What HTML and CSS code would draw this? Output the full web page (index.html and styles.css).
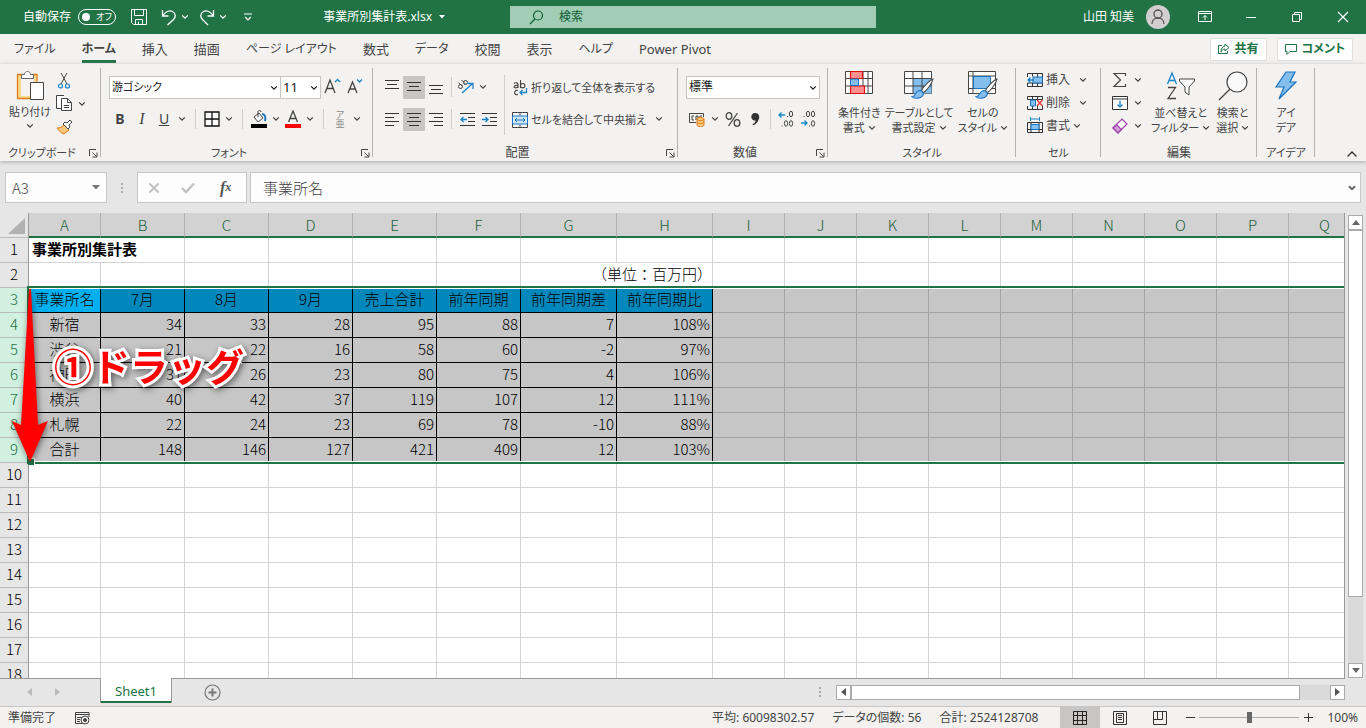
FILE: index.html
```html
<!DOCTYPE html>
<html lang="ja">
<head>
<meta charset="utf-8">
<title>事業所別集計表.xlsx</title>
<link rel="stylesheet" href="styles.css">
</head>
<body>
<svg class="defs" aria-hidden="true">
  <symbol id="chev" viewBox="0 0 8 6"><path d="M1.200 1.400 4 4.200 6.800 1.400" fill="none" stroke="currentColor" stroke-width="1.300"/></symbol>
  <symbol id="launch" viewBox="0 0 10 10"><path d="M1.500 8V1.500H8M4.500 4.500l4 4M9 4.500V9H4.500" fill="none" stroke="currentColor"/></symbol>
  <symbol id="dots" viewBox="0 0 4 12"><path d="M1 1h2v2H1zM1 5h2v2H1zM1 9h2v2H1z" fill="currentColor"/></symbol>
  <symbol id="brush" viewBox="0 0 22 20"><path d="M21 1C18 2 12 8 10 12l2 2C16 11 20 5 21 1z" fill="#fff" stroke="#444"/><path d="M1 18c3 0 3-5 7-6 3 0 5 3 3 5-2 3-7 3-10 1z" fill="#83beec" stroke="#1a73bf"/></symbol>
</svg>

<header class="titlebar">
  <div class="title-left">
    <label class="autosave">自動保存
      <span class="switch"><input type="checkbox" role="switch"><span class="switch-text">オフ</span></span>
    </label>
    <button class="tb save" aria-label="保存"><svg width="18" height="18" viewBox="0 0 18 18" fill="none" stroke="#fff"><path d="M1.500 1.500h15v15h-13l-2-2zM4.500 1.500v6h9v-6M5.500 16.500v-5h7v5M8.500 13.500v3"/></svg></button>
    <button class="tb" aria-label="元に戻す"><svg width="18" height="18" viewBox="0 0 18 18" fill="none" stroke="#fff" stroke-width="1.300"><path d="M2.500 2v6h6M2.800 7.500C6 3 10 2 12.500 3.500c3.500 2 3.500 5.500 1 8L7.500 17"/></svg></button>
    <button class="tb drop" aria-label="元に戻すの一覧"><svg class="chev"><use href="#chev"/></svg></button>
    <button class="tb" aria-label="やり直し"><svg width="18" height="18" viewBox="0 0 18 18" fill="none" stroke="#fff" stroke-width="1.300"><path d="M15.500 2v6h-6M15.200 7.500C12 3 8 2 5.500 3.500c-3.500 2-3.500 5.500-1 8L10 17"/></svg></button>
    <button class="tb drop" aria-label="やり直しの一覧"><svg class="chev"><use href="#chev"/></svg></button>
    <button class="tb quick" aria-label="クイック アクセス"><svg width="8" height="8" viewBox="0 0 8 8" fill="none" stroke="#fff" stroke-width="1.200"><path d="M0 1h8M1.200 4 4 6.800 6.800 4"/></svg></button>
    <button class="tb doc">事業所別集計表.xlsx<svg width="6" height="4" viewBox="0 0 6 4"><path d="M0 0h6L3 3.500z" fill="#fff"/></svg></button>
  </div>
  <label class="search">
    <svg width="15" height="15" viewBox="0 0 15 15" fill="none" stroke="#0f5c35" stroke-width="1.200"><circle cx="9" cy="5.500" r="4.500"/><path d="M6 9 1 14"/></svg>
    <input type="text" placeholder="検索" aria-label="検索">
  </label>
  <div class="title-right">
    <span class="user">山田 知美</span>
    <svg class="avatar" width="24" height="24" viewBox="0 0 24 24" fill="none" stroke="#555" stroke-width="1.300"><circle cx="12" cy="12" r="12" fill="#d0cece" stroke="none"/><circle cx="12" cy="9" r="4"/><path d="M6 19c0-8 12-8 12 0"/></svg>
    <button class="win" aria-label="リボンの表示オプション"><svg width="14" height="12" viewBox="0 0 14 12" fill="none" stroke="#fff"><path d="M.5.5h13v10H.5zM.5 2.500h13M7 9V4.500M5 6.500l2-2 2 2"/></svg></button>
    <button class="win" aria-label="最小化"><svg width="12" height="12" viewBox="0 0 12 12"><path d="M1 6.500h10" stroke="#fff"/></svg></button>
    <button class="win" aria-label="元に戻す (縮小)"><svg width="12" height="12" viewBox="0 0 12 12" fill="none" stroke="#fff"><path d="M1.500 3.500h7v7h-7zM3.500 3.500v-2h7v7h-2"/></svg></button>
    <button class="win" aria-label="閉じる"><svg width="12" height="12" viewBox="0 0 12 12"><path d="m1 1 10 10M11 1 1 11" stroke="#fff" stroke-width="1.200"/></svg></button>
  </div>
</header>

<nav class="tabs">
  <a href="#" class="kana">ファイル</a><a href="#" class="kana current">ホーム</a><a href="#">挿入</a><a href="#">描画</a><a href="#" class="kana">ページ レイアウト</a><a href="#">数式</a><a href="#" class="kana">データ</a><a href="#">校閲</a><a href="#">表示</a><a href="#" class="kana">ヘルプ</a><a href="#">Power Pivot</a>
  <div class="tab-actions">
    <button><svg width="12" height="12" viewBox="0 0 12 12" fill="none" stroke="#217346"><path d="M4 2.500H.5v8h9V8M7 1l4 3.500L7 8V6C5 6 4 7 3 9c0-3 1-5.500 4-6z"/></svg>共有</button>
    <button><svg width="12" height="12" viewBox="0 0 12 12" fill="none" stroke="#217346"><path d="M.5 1.500h11v7H5l-3 3v-3H.5z"/></svg>コメント</button>
  </div>
</nav>

<section class="ribbon" aria-label="ホーム">
  <div class="group g-clip">
    <div class="body top">
      <button class="large"><svg width="28" height="32" viewBox="0 0 28 32" fill="none"><path d="M2 5h6v3H5v18h9v3H1V5zM15 5h6v7h-3V8h-3z" fill="#f9d98b"/><path d="M7 4.500H1.500v24H14M16 4.500h5v7" stroke="#e07b1a" stroke-width="1.300"/><path d="M5.500 8.500v-4h3c0-4 6-4 6 0h3v4z" fill="#fff" stroke="#666"/><path d="M14.500 12.500h13v17h-13z" fill="#fff" stroke="#444"/></svg>貼り付け<svg class="chev"><use href="#chev"/></svg></button>
      <div class="stack">
        <div class="line"><button class="ic" aria-label="切り取り"><svg width="16" height="16" viewBox="0 0 16 16" fill="none"><path d="M5 0l6 11M11 0 5 11" stroke="#444"/><circle cx="4.500" cy="13" r="2" stroke="#1a84c8" stroke-width="1.200"/><circle cx="11.500" cy="13" r="2" stroke="#1a84c8" stroke-width="1.200"/></svg></button></div>
        <div class="line"><button class="ic" aria-label="コピー"><svg width="16" height="17" viewBox="0 0 16 17" fill="#fff" stroke="#444"><path d="M6 13.500H.5V.5H8"/><path d="M5.500 3.500h6l4 4v8h-10z"/><path d="M11.500 3.500v4h4M8 10.500h5M8 12.500h5" fill="none"/></svg></button><button class="drop" aria-label="コピーの一覧"><svg class="chev"><use href="#chev"/></svg></button></div>
        <div class="line"><button class="ic" aria-label="書式のコピー"><svg width="17" height="16" viewBox="0 0 17 16"><path d="M1 9c3 0 5-1 7-3l5 5c-2 1-3 3-5 4-3-1-5-3-7-6z" fill="#f9c87a" stroke="#e07b1a"/><path d="m7 5 2-2 2 1 3-3 2 2-3 3 1 2-2 2z" fill="#fff" stroke="#444"/></svg></button></div>
      </div>
    </div>
    <div class="caption kana">クリップボード<button aria-label="クリップボードの詳細"><svg><use href="#launch"/></svg></button></div>
  </div>

  <div class="group g-font">
    <div class="body rows">
      <div class="line">
        <span class="combo face"><select class="kana" aria-label="フォント"><option>游ゴシック</option></select><svg class="chev"><use href="#chev"/></svg></span><span class="combo size"><select aria-label="フォント サイズ"><option>11</option></select><svg class="chev"><use href="#chev"/></svg></span>
        <button class="ic" aria-label="フォント サイズの拡大"><svg width="18" height="18" viewBox="0 0 18 18" fill="none"><path d="M2 15 7 2l5 13M4 10.500h6" stroke="#444" stroke-width="1.300"/><path d="m12 4 2.500-2.500L17 4" stroke="#1a84c8" stroke-width="1.300"/></svg></button>
        <button class="ic" aria-label="フォント サイズの縮小"><svg width="18" height="18" viewBox="0 0 18 18" fill="none"><path d="M3 15 7.500 4 12 15M5 11h5" stroke="#444" stroke-width="1.300"/><path d="M12 1.500 14.500 4 17 1.500" stroke="#1a84c8" stroke-width="1.300"/></svg></button>
      </div>
      <div class="line">
        <button class="ic b">B</button><button class="ic i">I</button><button class="ic u">U</button><button class="drop" aria-label="下線の一覧"><svg class="chev"><use href="#chev"/></svg></button>
        <i class="sep"></i>
        <button class="ic n" aria-label="罫線"><svg width="16" height="16" viewBox="0 0 16 16"><path d="M1 1h14v14H1zM8 1v14M1 8h14" fill="#fff" stroke="#111" stroke-width="1.300"/></svg></button><button class="drop" aria-label="罫線の一覧"><svg class="chev"><use href="#chev"/></svg></button>
        <i class="sep"></i>
        <button class="ic n" aria-label="塗りつぶしの色"><svg width="18" height="18" viewBox="0 0 18 18" fill="none"><path d="M1 14h16v4H1z" fill="#000"/><path d="m4 7 5-4 4 5-5 4zM8 7V2c0-2 3-2 3 0" stroke="#444" fill="#fff"/><path d="M12 4c3 0 4 3 3 7" stroke="#1a73bf" stroke-width="2"/></svg></button><button class="drop" aria-label="塗りつぶしの色の一覧"><svg class="chev"><use href="#chev"/></svg></button>
        <button class="ic n" aria-label="フォントの色"><svg width="18" height="18" viewBox="0 0 18 18" fill="none"><path d="M1 14h16v4H1z" fill="#f00"/><path d="M4.500 12 9 1l4.500 11M6 8.500h6" stroke="#444" stroke-width="1.300"/></svg></button><button class="drop" aria-label="フォントの色の一覧"><svg class="chev"><use href="#chev"/></svg></button>
        <i class="sep"></i>
        <button class="ic n ruby" aria-label="ふりがな"><span>ア</span><span>亜</span></button><button class="drop" aria-label="ふりがなの一覧"><svg class="chev"><use href="#chev"/></svg></button>
      </div>
    </div>
    <div class="caption kana">フォント<button aria-label="フォントの詳細"><svg><use href="#launch"/></svg></button></div>
  </div>

  <div class="group g-align">
    <div class="body columns">
      <div class="rows">
        <div class="line">
          <button class="ic" aria-label="上揃え"><svg width="14" height="14" viewBox="0 0 14 14"><path d="M0 .5h14M2 4.500h10M0 8.500h14" stroke="#333"/></svg></button><button class="ic on" aria-label="上下中央揃え"><svg width="14" height="14" viewBox="0 0 14 14"><path d="M0 2.500h14M2 6.500h10M0 10.500h14" stroke="#333"/></svg></button><button class="ic" aria-label="下揃え"><svg width="14" height="14" viewBox="0 0 14 14"><path d="M0 5.500h14M2 9.500h10M0 13.500h14" stroke="#333"/></svg></button>
          <i class="sep"></i>
          <button class="ic n" aria-label="方向"><svg width="18" height="16" viewBox="0 0 18 16" fill="none"><g stroke="#444"><circle cx="3.500" cy="7.500" r="2"/><path d="m1.500 3.500 4 4"/><circle cx="8.500" cy="3.500" r="2"/><path d="M4.500 1l4 4"/></g><path d="M5 14 15 5M10.500 4.500H16V10" stroke="#1a84c8" stroke-width="1.300"/></svg></button><button class="drop" aria-label="方向の一覧"><svg class="chev"><use href="#chev"/></svg></button>
        </div>
        <div class="line">
          <button class="ic" aria-label="左揃え"><svg width="14" height="14" viewBox="0 0 14 14"><path d="M0 1.500h14M0 5.500h9M0 9.500h14M0 13.500h9" stroke="#333"/></svg></button><button class="ic on" aria-label="中央揃え"><svg width="14" height="14" viewBox="0 0 14 14"><path d="M0 1.500h14M2 5.500h10M0 9.500h14M2 13.500h10" stroke="#333"/></svg></button><button class="ic" aria-label="右揃え"><svg width="14" height="14" viewBox="0 0 14 14"><path d="M0 1.500h14M5 5.500h9M0 9.500h14M5 13.500h9" stroke="#333"/></svg></button>
          <i class="sep"></i>
          <button class="ic" aria-label="インデントを減らす"><svg width="15" height="14" viewBox="0 0 15 14" fill="none"><path d="M0 1.500h15M8 5.500h7M8 9.500h7M0 13.500h15" stroke="#333"/><path d="M7 7.500H1M3.500 5 1 7.500 3.500 10" stroke="#1a84c8" stroke-width="1.300"/></svg></button><button class="ic" aria-label="インデントを増やす"><svg width="15" height="14" viewBox="0 0 15 14" fill="none"><path d="M0 1.500h15M8 5.500h7M8 9.500h7M0 13.500h15" stroke="#333"/><path d="M0 7.500h6M3.500 5 6 7.500 3.500 10" stroke="#1a84c8" stroke-width="1.300"/></svg></button>
        </div>
      </div>
      <i class="sep tall"></i>
      <div class="rows">
        <div class="line"><button class="wide kana"><svg width="16" height="17" viewBox="0 0 16 17" fill="none"><g stroke="#444" stroke-width="1.100"><path d="M2 3.500c2-1.500 4-.5 4 1V8M6 5.500C3 5 2 6 2 7s3 1.500 4-.5M8.500 0v8"/><circle cx="10.700" cy="5.700" r="2.200"/><path d="M6 10.500c-4-1.500-5 5.500 0 4"/></g><path d="M14.500 8v4.500H8M10.500 10 8 12.500l2.500 2.500" stroke="#1a84c8" stroke-width="1.300"/></svg>折り返して全体を表示する</button></div>
        <div class="line"><button class="wide kana"><svg width="16" height="16" viewBox="0 0 16 16" fill="none"><path d="M.5.5h15v15H.5zM8 .5v3M8 12.500v3" stroke="#444" fill="#fff"/><path d="M.5 4h15v8H.5z" stroke="#1a73bf" fill="#cfe6f8"/><path d="M3 8h10M5 6 3 8l2 2M11 6l2 2-2 2" stroke="#1a73bf"/></svg>セルを結合して中央揃え</button><button class="drop far" aria-label="結合の一覧"><svg class="chev"><use href="#chev"/></svg></button></div>
      </div>
    </div>
    <div class="caption">配置<button aria-label="配置の詳細"><svg><use href="#launch"/></svg></button></div>
  </div>

  <div class="group g-num">
    <div class="body rows">
      <div class="line"><span class="combo format"><select aria-label="表示形式"><option>標準</option></select><svg class="chev"><use href="#chev"/></svg></span></div>
      <div class="line">
        <button class="ic" aria-label="通貨表示形式"><svg width="18" height="16" viewBox="0 0 18 16" fill="none"><path d="M8 11.500H1.500v-9h14V6" stroke="#444"/><path d="M6 5H4v4h2M8 9V5h2v3M12 6V5h2" stroke="#444"/><path d="M9 8c0-2 7-2 7 0v6c0 2-7 2-7 0z" fill="#f9c87a" stroke="#e07b1a"/><path d="M9 8c0 2 7 2 7 0M9 11c0 2 7 2 7 0" stroke="#e07b1a"/></svg></button><button class="drop" aria-label="通貨の一覧"><svg class="chev"><use href="#chev"/></svg></button>
        <button class="ic" aria-label="パーセント スタイル"><svg width="16" height="15" viewBox="0 0 16 15" fill="none" stroke="#444" stroke-width="1.300"><ellipse cx="4" cy="4" rx="2.800" ry="3.300"/><ellipse cx="12" cy="11" rx="2.800" ry="3.300"/><path d="M12.500 1 3.500 14"/></svg></button>
        <button class="ic" aria-label="桁区切りスタイル"><svg width="10" height="14" viewBox="0 0 10 14"><path d="M5 1c5 0 5 5 3 8-1 2-3 4-5 4l-.5-1c2-.5 3-2 3-3.500C0 9 0 1 5 1z" fill="#333"/></svg></button>
        <i class="sep"></i>
        <button class="ic dec" aria-label="小数点以下の表示桁数を増やす"><svg width="18" height="18" viewBox="0 0 18 18" fill="none"><path d="M8 5H2M4.500 2.500 2 5l2.500 2.500" stroke="#1a84c8" stroke-width="1.300"/><g stroke="#444"><ellipse cx="14" cy="4" rx="1.600" ry="2.800"/><ellipse cx="9" cy="13.500" rx="1.600" ry="2.800"/><ellipse cx="14" cy="13.500" rx="1.600" ry="2.800"/><path d="M10 6.500h1M4.500 16h1"/></g></svg></button>
        <button class="ic dec" aria-label="小数点以下の表示桁数を減らす"><svg width="18" height="18" viewBox="0 0 18 18" fill="none"><path d="M2 13h6M5.500 10.500 8 13l-2.500 2.500" stroke="#1a84c8" stroke-width="1.300"/><g stroke="#444"><ellipse cx="9" cy="4" rx="1.600" ry="2.800"/><ellipse cx="14" cy="4" rx="1.600" ry="2.800"/><ellipse cx="14" cy="13.500" rx="1.600" ry="2.800"/><path d="M4.500 6.500h1M10 16h1"/></g></svg></button>
      </div>
    </div>
    <div class="caption">数値<button aria-label="数値の詳細"><svg><use href="#launch"/></svg></button></div>
  </div>

  <div class="group g-style">
    <div class="body top">
      <button class="large"><svg width="30" height="26" viewBox="0 0 30 26"><path d="M1.500 1.500h27v22h-27zM1.500 8.500h27M1.500 16h27M6.500 1.500v22M24 1.500v22M19 1.500v22" fill="#fff" stroke="#444"/><path d="M6.500 1.500h12v7h-12zM6.500 16h14v7.500h-14z" fill="#ff8f8f" stroke="#d11" stroke-width="1.200"/><path d="M6.500 9h8v6.500h-8z" fill="#83beec" stroke="#1a73bf"/></svg>条件付き<span>書式<svg class="chev"><use href="#chev"/></svg></span></button>
      <button class="large"><svg width="32" height="29" viewBox="0 0 32 29"><path d="M1.500 1.500h27v22h-27z" fill="#fff" stroke="#444"/><path d="M10 8h18.500v15.500H10z" fill="#83beec"/><path d="M1.500 8.500h27M1.500 16h27M10 1.500v22M19 1.500v22" stroke="#444" fill="none"/><use href="#brush" x="8" y="8" width="23" height="21"/></svg>テーブルとして<span>書式設定<svg class="chev"><use href="#chev"/></svg></span></button>
      <button class="large"><svg width="32" height="29" viewBox="0 0 32 29"><path d="M1.500 1.500h27v22h-27zM1.500 6h27M1.500 18.500h27M6 1.500v22" fill="#fff" stroke="#444"/><path d="M6.500 6.500h17v12h-17z" fill="#83beec" stroke="#1a73bf"/><use href="#brush" x="8" y="8" width="23" height="21"/></svg>セルの<span>スタイル<svg class="chev"><use href="#chev"/></svg></span></button>
    </div>
    <div class="caption kana">スタイル</div>
  </div>

  <div class="group g-cell">
    <div class="body top">
      <div class="stack">
        <div class="line"><button class="wide"><svg width="16" height="16" viewBox="0 0 16 16" fill="none"><path d="M.5 5V1.500h15v13H.5V11M5.500 1.500v3M10.500 1.500v13M5.500 11v3.500M.5 11h15" stroke="#333"/><path d="M6 5h9.500v6H6z" fill="#83beec" stroke="#1a73bf"/><path d="M7 8H1M3.500 5.500 1 8l2.500 2.500" stroke="#1a84c8" stroke-width="1.300"/></svg>挿入</button><button class="drop far" aria-label="挿入の一覧"><svg class="chev"><use href="#chev"/></svg></button></div>
        <div class="line"><button class="wide"><svg width="16" height="16" viewBox="0 0 16 16" fill="none"><path d="M.5 4.500v-3h15v3M.5 11v3.500h15V11M5.500 1.500v3M10.500 1.500v3M5.500 11v3.500M10.500 11v3.500M.5 4.500h15" stroke="#333"/><path d="M3.500 5h5v6h-5z" fill="#83beec" stroke="#1a73bf"/><path d="m10 5 5.500 6M15.500 5 10 11" stroke="#e33" stroke-width="1.300"/></svg>削除</button><button class="drop far" aria-label="削除の一覧"><svg class="chev"><use href="#chev"/></svg></button></div>
        <div class="line"><button class="wide"><svg width="16" height="17" viewBox="0 0 16 17" fill="none"><path d="M.5 5.500h15v10H.5zM4 5.500v10M12 5.500v10M.5 12.500h15" stroke="#333"/><path d="M4 7.500h8v5H4z" fill="#83beec" stroke="#1a73bf"/><path d="M3.500 0v4M12.500 0v4M3.500 2h9" stroke="#1a84c8"/></svg>書式</button><button class="drop" aria-label="書式の一覧"><svg class="chev"><use href="#chev"/></svg></button></div>
      </div>
    </div>
    <div class="caption kana">セル</div>
  </div>

  <div class="group g-edit">
    <div class="body top">
      <div class="stack">
        <div class="line"><button class="ic" aria-label="オート SUM"><svg width="16" height="16" viewBox="0 0 16 16" fill="none"><path d="M13.500 4V1.500H2L8.500 8 2 14.500h11.500V12" stroke="#444" stroke-width="1.200"/></svg></button><button class="drop" aria-label="SUM の一覧"><svg class="chev"><use href="#chev"/></svg></button></div>
        <div class="line"><button class="ic" aria-label="フィル"><svg width="16" height="16" viewBox="0 0 16 16" fill="none"><path d="M.5 1.500h15v13H.5zM.5 4h15" stroke="#333" fill="#fff"/><path d="M8 5.500V12M5.500 9.500 8 12l2.500-2.500" stroke="#1a84c8" stroke-width="1.300"/></svg></button><button class="drop" aria-label="フィルの一覧"><svg class="chev"><use href="#chev"/></svg></button></div>
        <div class="line"><button class="ic" aria-label="クリア"><svg width="16" height="16" viewBox="0 0 16 16"><path d="m1 10 9-9 5 5-9 9z" fill="#fff" stroke="#9b3fa8" stroke-width="1.200"/><path d="m1 10 3.500-3.500 5 5L6 15z" fill="#d39bdb" stroke="#9b3fa8" stroke-width="1.200"/></svg></button><button class="drop" aria-label="クリアの一覧"><svg class="chev"><use href="#chev"/></svg></button></div>
      </div>
      <button class="large"><svg width="30" height="30" viewBox="0 0 30 30" fill="none"><path d="M1.500 13 6 2l4.500 11M3 9.500h6" stroke="#1a84c8" stroke-width="1.300"/><path d="M2 16.500h7.500L2 27.500h8" stroke="#444" stroke-width="1.300"/><path d="M13.500 8h15v2L23 16v8l-4-3v-5l-5.500-6z" fill="#fff" stroke="#444"/></svg>並べ替えと<span>フィルター<svg class="chev"><use href="#chev"/></svg></span></button>
      <button class="large"><svg width="30" height="30" viewBox="0 0 30 30" fill="none" stroke="#444" stroke-width="1.200"><circle cx="19" cy="11" r="10" fill="#fafafa"/><path d="M12 18 1 29"/></svg>検索と<span>選択<svg class="chev"><use href="#chev"/></svg></span></button>
    </div>
    <div class="caption">編集</div>
  </div>

  <div class="group g-idea">
    <div class="body top">
      <button class="large"><svg width="24" height="30" viewBox="0 0 24 30"><path d="M12 1h9l-5 10h6L5 28l5-12H2z" fill="#83beec" stroke="#1a73bf" stroke-width="1.200"/></svg>アイ<span>デア</span></button>
    </div>
    <div class="caption kana">アイデア</div>
  </div>
  <button class="collapse" aria-label="リボンを折りたたむ"><svg width="12" height="8" viewBox="0 0 12 8"><path d="m1.500 6.500 4.500-4.500 4.500 4.500" fill="none" stroke="#333" stroke-width="1.300"/></svg></button>
</section>

<div class="formula">
  <div class="box name"><input type="text" value="A3" aria-label="名前ボックス"><button aria-label="名前の一覧"><svg width="8" height="5" viewBox="0 0 8 5"><path d="M0 0h8L4 4.500z" fill="#777"/></svg></button></div>
  <svg class="dots"><use href="#dots"/></svg>
  <div class="box fx">
    <button aria-label="キャンセル"><svg width="12" height="12" viewBox="0 0 12 12"><path d="m1.500 1.500 9 9M10.500 1.500l-9 9" stroke="#c0c0c0" stroke-width="1.800"/></svg></button>
    <button aria-label="入力"><svg width="14" height="12" viewBox="0 0 14 12"><path d="m1 6 4 4 8-8.500" fill="none" stroke="#c0c0c0" stroke-width="2.400"/></svg></button>
    <button class="fx-btn">f<sub>x</sub></button>
  </div>
  <div class="box text"><input type="text" value="事業所名" aria-label="数式バー"><button aria-label="数式バーの展開"><svg width="8" height="6" viewBox="0 0 8 6"><path d="m1 1.200 3 3 3-3" fill="none" stroke="#666" stroke-width="2"/></svg></button></div>
</div>

<main class="work">
  <div class="sheet">
    <table>
      <colgroup><col class="c-row"><col class="c-a"><col span="5" class="c-b"><col span="2" class="c-g"><col span="9" class="c-a"></colgroup>
      <thead><tr><th class="corner"><svg width="18" height="18" viewBox="0 0 18 18"><path d="M17 1v16H0z" fill="#b1b1b1"/></svg></th><th>A</th><th>B</th><th>C</th><th>D</th><th>E</th><th>F</th><th>G</th><th>H</th><th>I</th><th>J</th><th>K</th><th>L</th><th>M</th><th>N</th><th>O</th><th>P</th><th>Q</th></tr></thead>
      <tbody>
        <tr><th>1</th><td class="heading" colspan="2">事業所別集計表</td><td><td><td><td><td><td><td><td><td><td><td><td><td><td><td></tr>
        <tr><th>2</th><td><td><td><td><td><td><td class="unit" colspan="2">（単位：百万円）</td><td><td><td><td><td><td><td><td><td></tr>
        <tr class="sel head"><th>3</th><td class="active">事業所名</td><td>7月</td><td>8月</td><td>9月</td><td>売上合計</td><td>前年同期</td><td>前年同期差</td><td>前年同期比</td><td><td><td><td><td><td><td><td><td></tr>
        <tr class="sel"><th>4</th><td>新宿</td><td>34</td><td>33</td><td>28</td><td>95</td><td>88</td><td>7</td><td>108%</td><td><td><td><td><td><td><td><td><td></tr>
        <tr class="sel"><th>5</th><td>渋谷</td><td>21</td><td>22</td><td>16</td><td>58</td><td>60</td><td>-2</td><td>97%</td><td><td><td><td><td><td><td><td><td></tr>
        <tr class="sel"><th>6</th><td>神田</td><td>31</td><td>26</td><td>23</td><td>80</td><td>75</td><td>4</td><td>106%</td><td><td><td><td><td><td><td><td><td></tr>
        <tr class="sel"><th>7</th><td>横浜</td><td>40</td><td>42</td><td>37</td><td>119</td><td>107</td><td>12</td><td>111%</td><td><td><td><td><td><td><td><td><td></tr>
        <tr class="sel"><th>8</th><td>札幌</td><td>22</td><td>24</td><td>23</td><td>69</td><td>78</td><td>-10</td><td>88%</td><td><td><td><td><td><td><td><td><td></tr>
        <tr class="sel"><th>9</th><td>合計</td><td>148</td><td>146</td><td>127</td><td>421</td><td>409</td><td>12</td><td>103%</td><td><td><td><td><td><td><td><td><td></tr>
        <tr><th>10</th><td><td><td><td><td><td><td><td><td><td><td><td><td><td><td><td><td></tr>
        <tr><th>11</th><td><td><td><td><td><td><td><td><td><td><td><td><td><td><td><td><td></tr>
        <tr><th>12</th><td><td><td><td><td><td><td><td><td><td><td><td><td><td><td><td><td></tr>
        <tr><th>13</th><td><td><td><td><td><td><td><td><td><td><td><td><td><td><td><td><td></tr>
        <tr><th>14</th><td><td><td><td><td><td><td><td><td><td><td><td><td><td><td><td><td></tr>
        <tr><th>15</th><td><td><td><td><td><td><td><td><td><td><td><td><td><td><td><td><td></tr>
        <tr><th>16</th><td><td><td><td><td><td><td><td><td><td><td><td><td><td><td><td><td></tr>
        <tr><th>17</th><td><td><td><td><td><td><td><td><td><td><td><td><td><td><td><td><td></tr>
        <tr><th>18</th><td><td><td><td><td><td><td><td><td><td><td><td><td><td><td><td><td></tr>
      </tbody>
    </table>
    <div class="selection"><span class="handle"></span></div>
    <svg class="drag-arrow" width="44" height="186" viewBox="0 0 44 186"><path d="M21 3h2l7 136 10-4-18 41L4 135l9 4z" fill="#f00"/></svg>
    <div class="note">①ドラッグ</div>
  </div>
  <div class="vscroll">
    <button aria-label="上へ"><svg width="8" height="5" viewBox="0 0 8 5"><path d="M0 5h8L4 0z" fill="#666"/></svg></button>
    <div class="thumb"></div>
    <button aria-label="下へ"><svg width="8" height="5" viewBox="0 0 8 5"><path d="M0 0h8L4 5z" fill="#666"/></svg></button>
  </div>
</main>

<div class="sheetbar">
  <button class="nav" aria-label="前のシート"><svg width="5" height="8" viewBox="0 0 5 8"><path d="M5 0v8L0 4z" fill="#bbb"/></svg></button>
  <button class="nav" aria-label="次のシート"><svg width="5" height="8" viewBox="0 0 5 8"><path d="M0 0v8l5-4z" fill="#bbb"/></svg></button>
  <button class="sheet-tab">Sheet1</button>
  <button class="add" aria-label="新しいシート"><svg width="17" height="17" viewBox="0 0 17 17" fill="none" stroke="#777"><circle cx="8.500" cy="8.500" r="7.500" stroke-width="1.200"/><path d="M8.500 4.500v8M4.500 8.500h8" stroke-width="2"/></svg></button>
  <svg class="dots"><use href="#dots"/></svg>
  <div class="hscroll">
    <button aria-label="左へ"><svg width="5" height="8" viewBox="0 0 5 8"><path d="M5 0v8L0 4z" fill="#555"/></svg></button>
    <div class="thumb"></div>
    <button aria-label="右へ"><svg width="5" height="8" viewBox="0 0 5 8"><path d="M0 0v8l5-4z" fill="#555"/></svg></button>
  </div>
</div>

<footer class="status">
  <span>準備完了</span>
  <svg class="macro" width="15" height="14" viewBox="0 0 15 14" fill="none" stroke="#444"><path d="M14 6V1.500H.5v11H7M.5 3.500h13.500M2 6.500h5M2 8.500h3M2 10.500h3"/><circle cx="10" cy="9" r="4"/><circle cx="10" cy="9" r="1.500" fill="#444"/></svg>
  <div class="stats"><span>平均: 60098302.57</span><span>データの個数: 56</span><span>合計: 2524128708</span></div>
  <div class="views">
    <button class="on" aria-label="標準"><svg width="14" height="14" viewBox="0 0 14 14" fill="none" stroke="#222"><path d="M.5.5h13v13H.5zM.5 4.500h13M.5 9.500h13M4.500.5v13M9.500.5v13"/></svg></button>
    <button aria-label="ページ レイアウト"><svg width="14" height="14" viewBox="0 0 14 14" fill="none" stroke="#333"><path d="M.5.5h13v13H.5zM3.500 2.500h7v9h-7zM5 4.500h4M5 6.500h4M5 8.500h4"/></svg></button>
    <button aria-label="改ページ プレビュー"><svg width="14" height="14" viewBox="0 0 14 14" fill="none" stroke="#333"><path d="M.5.5h13v13H.5zM4.500.5v8M9.500.5v8M.5 8.500h9"/></svg></button>
  </div>
  <button class="zoom-btn" aria-label="縮小"><svg width="9" height="9" viewBox="0 0 9 9"><path d="M0 4.500h9" stroke="#333"/></svg></button>
  <input class="zoom" type="range" min="0" max="100" value="50" aria-label="ズーム">
  <button class="zoom-btn" aria-label="拡大"><svg width="9" height="9" viewBox="0 0 9 9"><path d="M0 4.500h9M4.500 0v9" stroke="#333"/></svg></button>
  <span class="percent">100%</span>
</footer>
</body>
</html>
```
FILE: styles.css
```css
* { box-sizing: border-box; }
html, body { height: 100%; }
body {
  margin: 0;
  display: flex;
  flex-direction: column;
  overflow: hidden;
  background: #e6e6e6;
  color: #444;
  font: 12px/16px "Noto Sans", "Noto Sans CJK JP", sans-serif;
  font-feature-settings: "palt";
}
button, input, select {
  margin: 0;
  padding: 0;
  border: 0;
  border-radius: 0;
  background: none;
  color: inherit;
  font: inherit;
  font-feature-settings: inherit;
  outline: 0;
}
button { display: flex; align-items: center; justify-content: center; white-space: nowrap; }
svg { flex: none; display: block; }
.defs { position: absolute; width: 0; height: 0; }
.chev { width: 8px; height: 6px; }
.dots { width: 4px; height: 12px; color: #aaa; }
.kana { font-size: 11px; }

/* title bar */
.titlebar {
  flex: none;
  display: grid;
  grid-template-columns: 510fr 366fr 490fr;
  align-items: center;
  height: 34px;
  background: #217346;
  color: #fff;
}
.title-left, .title-right { display: flex; align-items: center; }
.title-left { padding-left: 23px; }
.autosave { display: flex; align-items: center; gap: 7px; }
.switch { position: relative; width: 38px; height: 16px; }
.switch input {
  appearance: none;
  display: block;
  width: 38px;
  height: 16px;
  border: 1px solid #fff;
  border-radius: 8px;
}
.switch input::before {
  content: "";
  display: block;
  width: 8px;
  height: 8px;
  margin: 3px;
  border-radius: 50%;
  background: #fff;
}
.switch-text { position: absolute; left: 18px; top: 0; font-size: 9px; }
.tb { height: 24px; }
.save { margin: 0 12px 0 14px; }
.drop { width: 14px; height: 22px; }
.tb.drop { width: 20px; padding-right: 6px; }
.quick { width: 26px; padding-right: 2px; }
.doc { gap: 7px; margin-left: auto; margin-right: 65px; }
.search {
  display: flex;
  align-items: center;
  gap: 15px;
  height: 22px;
  padding-left: 19px;
  background: #a0cdb4;
}
.search input { flex: 1; min-width: 0; }
.search input::placeholder { color: #0f5c35; opacity: 1; }
.title-right { justify-content: flex-end; }
.avatar { margin: 0 12px; }
.win { width: 46px; height: 32px; }

/* tabs */
.tabs {
  flex: none;
  display: flex;
  align-items: center;
  gap: 26px;
  height: 30px;
  padding: 0 13px 0 14px;
  background: #f3f2f1;
  font-size: 13px;
}
.tabs a {
  padding: 4px 0 2px;
  border-bottom: 3px solid transparent;
  color: #444;
  line-height: 18px;
  text-decoration: none;
  white-space: nowrap;
}
.tabs .kana { font-size: 12px; }
.tabs .current { border-color: #217346; font-weight: bold; }
.tab-actions { display: flex; gap: 10px; margin-left: auto; }
.tab-actions button {
  gap: 5px;
  height: 23px;
  padding: 0 7px;
  border: 1px solid #e1dfdd;
  border-radius: 2px;
  background: #fff;
  color: #217346;
  font-size: 12px;
  font-weight: bold;
}

/* ribbon */
.ribbon {
  flex: none;
  display: flex;
  position: relative;
  z-index: 1;
  height: 97px;
  background: #f3f2f1;
  box-shadow: 0 1px 4px #aaa;
}
.group { flex: none; display: flex; flex-direction: column; position: relative; padding: 4px 8px 0; }
.group::after { content: ""; position: absolute; right: 0; top: 4px; bottom: 4px; width: 1px; background: #b3b0ad; }
.g-clip { width: 101px; }
.g-font { width: 272px; }
.g-align { width: 305px; }
.g-num { width: 150px; }
.g-style { width: 188px; }
.g-cell { width: 85px; }
.g-edit { width: 156px; }
.g-idea { width: 58px; }
.body { flex: 1; display: flex; }
.body.rows { padding-top: 7px; }
.rows { display: flex; flex-direction: column; gap: 8px; }
.columns { padding-top: 7px; }
.line { display: flex; align-items: center; height: 24px; }
.stack .line { height: 23px; }
.caption { position: relative; height: 18px; text-align: center; line-height: 20px; white-space: nowrap; }
.g-clip .caption { padding-right: 18px; }
.g-font .caption, .g-align .caption, .g-num .caption { padding-right: 16px; }
.caption button { position: absolute; right: -5px; top: 5px; }
.caption svg { width: 10px; height: 10px; }
.ic { width: 22px; height: 23px; }
.ic.n { width: 20px; }
.ic.on { background: #c8c6c4; }
.b { font-weight: bold; font-size: 14px; }
.i { font-style: italic; font-family: "Liberation Serif", serif; font-size: 16px; }
.u { text-decoration: underline; font-size: 14px; }
.ruby { flex-direction: column; color: #888; font-size: 9px; line-height: 9px; }
.sep { flex: none; width: 1px; height: 20px; margin: 0 6px; background: #d0cecc; }
.g-align .sep, .g-num .sep { margin: 0 4px; }
.sep.tall { height: 60px; }
.combo { flex: none; position: relative; height: 23px; border: 1px solid #c8c6c4; background: #fff; color: #222; }
.combo select { appearance: none; display: block; width: 100%; height: 21px; padding: 0 2px; }
.combo .chev { position: absolute; right: 2px; top: 8px; pointer-events: none; }
.face { width: 172px; }
.size { width: 40px; border-left: 0; font-size: 13px; }
.format { width: 134px; }
.wide { gap: 3px; }
.g-align .wide { padding: 2px 0 0 3px; }
.drop.far { margin-left: 6px; }
.large { flex-direction: column; justify-content: flex-start; height: 66px; font-size: 11px; line-height: 15px; }
.large > svg:first-child { margin-bottom: auto; }
.large span { display: flex; align-items: center; gap: 3px; }
.top { padding-top: 3px; }
.g-clip .large { width: 46px; padding-top: 1px; }
.g-clip .large .chev { margin: 4px 0 6px; }
.g-clip .body { padding-top: 1px; margin-left: -1px; }
.g-style .body { gap: 4px; padding-left: 2px; }
.g-style .large, .g-edit .large, .g-idea .large { padding-top: 1px; }
.g-style .large { padding-top: 2px; }
.g-style .body, .g-edit .body, .g-cell .body, .g-idea .body { padding-top: 0; }
.g-style .large { height: 67px; }
.g-edit .large, .g-idea .large { height: 67px; padding-top: 3px; }
.g-cell .wide { padding-left: 3px; }
.g-edit .body { gap: 6px; }
.g-idea .body { justify-content: center; }
.collapse { margin: 84px 8px 0 auto; height: 12px; }

/* formula bar */
.formula { flex: none; display: flex; align-items: center; height: 52px; padding: 1px 5px 0; }
.box { display: flex; align-items: center; height: 31px; border: 1px solid #c6c6c6; background: #fdfdfd; }
.box input { flex: 1; min-width: 0; padding: 0; font: 15px/20px "Noto Sans CJK JP", sans-serif; font-feature-settings: normal; font-weight: 300; }
.name { width: 102px; padding: 0 6px; }
.formula .dots { margin: 0 13px; }
.fx { width: 110px; justify-content: space-around; }
.fx-btn { width: 20px; color: #555; font: italic bold 16px "Liberation Serif", serif; }
.fx-btn sub { font-size: 12px; }
.text { flex: 1; margin-left: 3px; padding: 0 4px 0 12px; }

/* grid */
.work { flex: 1; min-height: 0; display: flex; }
.sheet {
  flex: 1;
  min-width: 0;
  position: relative;
  overflow: hidden;
  border-right: 1px solid #999;
  background: #fff;
  color: #000;
  font: 15px/22px "Noto Sans CJK JP", sans-serif;
  font-feature-settings: normal;
  font-weight: 300;
}
.sheet table { width: 1361px; table-layout: fixed; border-spacing: 0; }
.c-row { width: 29px; }
.c-a { width: 72px; }
.c-b { width: 84px; }
.c-g { width: 96px; }
.sheet th, .sheet td { height: 25px; padding: 0 0 2px; border: 0 solid #d4d4d4; border-width: 0 1px 1px 0; white-space: nowrap; }
.sheet th { background: #e6e6e6; border-color: #999 #999 #bbb; font-weight: 300; text-align: center; }
.sheet thead th { padding: 0; background: #d2d2d2; border-right-color: #b0b0b0; border-bottom: 2px solid #217346; color: #1a623c; line-height: 21px; }
.sheet thead .corner { background: #e6e6e6; border-bottom: 1px solid #bbb; border-right-color: #999; }
.corner svg { margin: 2px 0 0 8px; }
.sheet .heading { padding-left: 3px; font-weight: bold; }
.unit { text-align: right; }
.sheet .sel th { background: #d2f0e0; color: #217346; }
.sheet .sel td { border-color: #a3a3a3; background: #c6c6c6; }
.sheet .sel td:nth-child(-n+9) { border-color: #000; padding-right: 2px; text-align: right; }
.sheet .sel td:nth-child(2), .sheet .head td:nth-child(n) { padding-right: 0; text-align: center; }
.sheet .head td:nth-child(-n+9) { background: #0087bb; }
.sheet .head td.active:nth-child(2) { background: #00b0f0; }
.selection {
  position: absolute;
  left: 27px;
  right: -4px;
  top: 73px;
  height: 178px;
  border: 2px solid #217346;
  box-shadow: inset 0 0 0 1px #fff;
}
.handle { position: absolute; left: -1px; bottom: -3px; width: 7px; height: 7px; border: solid #fff; border-width: 1px 1px 0 0; background: #217346; }
.drag-arrow { position: absolute; left: 8px; top: 73px; filter: drop-shadow(1px 2px 3px rgba(0, 0, 0, .5)); }
.note {
  position: absolute;
  left: 54px;
  top: 129px;
  color: #f00;
  font-size: 38px;
  font-weight: bold;
  line-height: 46px;
  -webkit-text-stroke: 6px #fff;
  paint-order: stroke fill;
  filter: drop-shadow(2px 2px 3px rgba(0, 0, 0, .5));
}
.vscroll { flex: none; display: flex; flex-direction: column; width: 15px; margin: 2px 3px 0; background: #dadada; }
.vscroll button, .hscroll button, .thumb { flex: none; border: 1px solid #ababab; background: #fff; }
.vscroll button { height: 15px; }
.vscroll .thumb { flex: 368; }
.vscroll .thumb + button { margin-top: 66px; }

/* sheet tabs */
.sheetbar { flex: none; display: flex; align-items: center; height: 28px; padding-right: 21px; position: relative; }
.sheetbar::before { content: ""; position: absolute; left: 0; right: 21px; top: 0; height: 1px; background: #999; }
.nav { width: 28px; height: 16px; }
.nav:first-child { margin-left: 15px; }
.sheet-tab {
  position: relative;
  align-self: flex-start;
  height: 25px;
  margin: 0 32px 0 29px;
  padding: 0 14px;
  border: solid #999;
  border-width: 0 1px;
  background: #fff;
  box-shadow: inset 0 -2px #217346;
  color: #217346;
  font-size: 13px;
}
.sheetbar .dots { margin-left: auto; margin-right: 14px; }
.hscroll { flex: 0 1 509px; display: flex; height: 15px; background: #dadada; }
.hscroll button { width: 15px; height: 15px; }
.hscroll .thumb { flex: 1; margin-right: 30px; }

/* status bar */
.status { flex: none; display: flex; align-items: center; height: 22px; padding: 0 8px; border-top: 1px solid #c6c6c6; background: #f3f2f1; }
.macro { margin-left: 19px; }
.stats { display: flex; gap: 18px; margin: 0 22px 0 auto; }
.views { display: flex; margin-right: 5px; }
.views button { width: 40px; height: 21px; }
.views .on { background: #c8c6c4; }
.zoom-btn { width: 10px; height: 16px; }
.zoom { appearance: none; width: 100px; height: 16px; margin: 0 4px; background: linear-gradient(#aaa, #aaa) center / 100% 1px no-repeat; }
.zoom::-webkit-slider-thumb { appearance: none; width: 5px; height: 11px; background: #666; }
.percent { margin-left: 14px; }
```
